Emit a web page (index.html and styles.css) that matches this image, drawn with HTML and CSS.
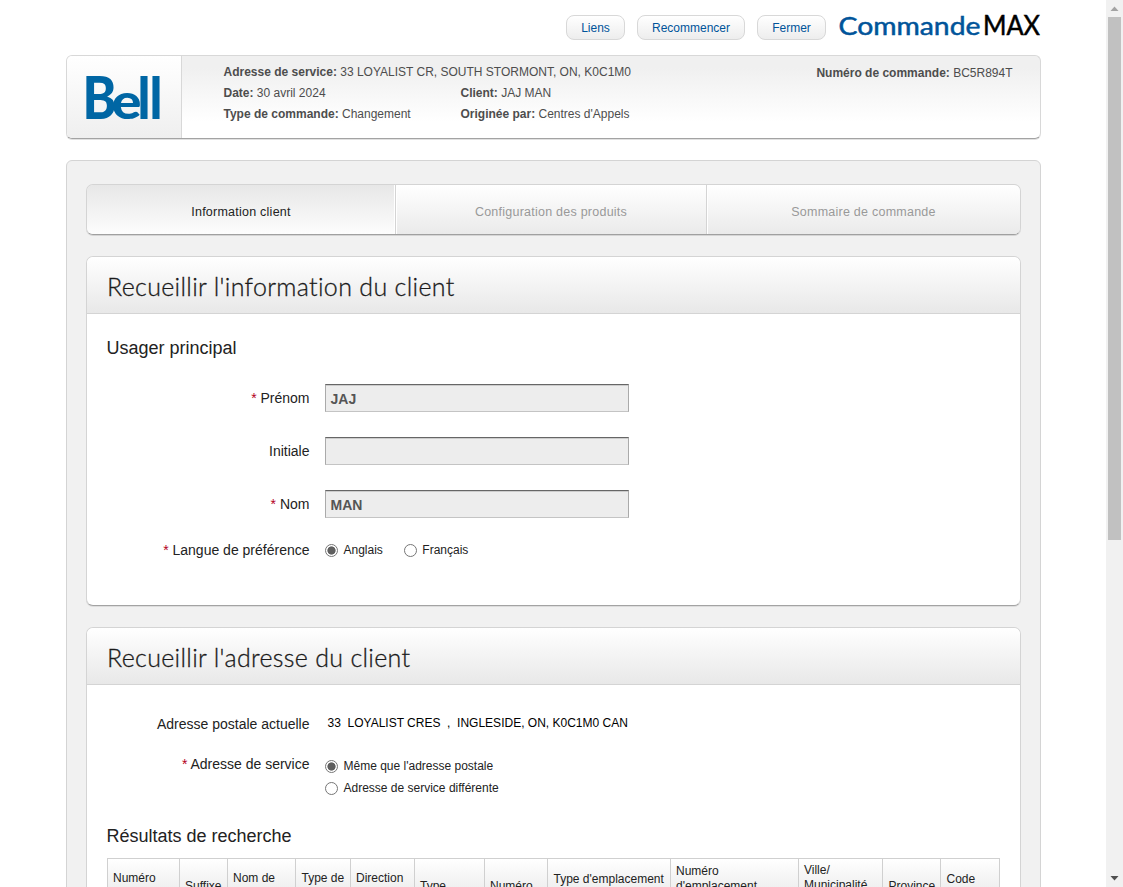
FILE: index.html
```html
<!DOCTYPE html>
<html lang="fr">
<head>
<meta charset="utf-8">
<title>CommandeMAX</title>
<link rel="stylesheet" href="styles.css">
</head>
<body>
<div class="viewport">
  <div class="page">
    <div class="topbar">
      <button class="btn btn-links">Liens</button>
      <button class="btn btn-restart">Recommencer</button>
      <button class="btn btn-close">Fermer</button>
      <svg class="brand" width="202" height="30" viewBox="0 0 202 30">
        <text class="brand-a" x="-.5" y="23.500" textLength="142" lengthAdjust="spacingAndGlyphs">Commande</text>
        <text class="brand-b" x="144" y="23.500" textLength="57" lengthAdjust="spacingAndGlyphs">MAX</text>
      </svg>
    </div>
    <header class="summary">
      <div class="summary-logo">
        <svg width="78" height="50" viewBox="0 0 78 50">
          <g class="bell">
            <text class="bell-b" x="-4.500" y="47" textLength="34" lengthAdjust="spacingAndGlyphs">B</text>
            <text class="bell-e" x="24.500" y="47" textLength="30" lengthAdjust="spacingAndGlyphs">e</text>
            <text class="bell-l" x="50.500" y="47" textLength="13" lengthAdjust="spacingAndGlyphs">l</text>
            <text class="bell-l" x="62.500" y="47" textLength="13" lengthAdjust="spacingAndGlyphs">l</text>
          </g>
        </svg>
      </div>
      <div class="summary-info">
        <div class="wide"><b>Adresse de service:</b> 33 LOYALIST CR, SOUTH STORMONT, ON, K0C1M0</div>
        <div><b>Date:</b> 30 avril 2024</div>
        <div><b>Client:</b> JAJ MAN</div>
        <div><b>Type de commande:</b> Changement</div>
        <div><b>Originée par:</b> Centres d'Appels</div>
      </div>
      <div class="summary-number"><b>Numéro de commande:</b> BC5R894T</div>
    </header>
    <main class="content">
      <nav class="tabs">
        <div class="tab tab-active">Information client</div>
        <div class="tab">Configuration des produits</div>
        <div class="tab">Sommaire de commande</div>
      </nav>
      <section class="card card-client">
        <h1 class="card-head">Recueillir l'information du client</h1>
        <h2 class="sub">Usager principal</h2>
        <div class="form">
          <div class="row"><label><i>*</i> Prénom</label><div class="field">JAJ</div></div>
          <div class="row"><label>Initiale</label><div class="field"></div></div>
          <div class="row"><label><i>*</i> Nom</label><div class="field">MAN</div></div>
          <div class="row row-lang"><label><i>*</i> Langue de préférence</label>
            <div class="radios"><span class="radio on"></span><span class="opt">Anglais</span><span class="radio second"></span><span class="opt">Français</span></div></div>
        </div>
      </section>
      <section class="card card-address">
        <h1 class="card-head">Recueillir l'adresse du client</h1>
        <div class="row row-postal"><label>Adresse postale actuelle</label><div class="postal">33&nbsp; LOYALIST CRES&nbsp; ,&nbsp; INGLESIDE, ON, K0C1M0 CAN</div></div>
        <div class="row row-service"><label><i>*</i> Adresse de service</label>
          <div class="stack">
            <div class="radios"><span class="radio on"></span><span class="opt">Même que l'adresse postale</span></div>
            <div class="radios"><span class="radio"></span><span class="opt">Adresse de service différente</span></div>
          </div></div>
        <h2 class="sub sub-results">Résultats de recherche</h2>
        <div class="table">
          <div class="c2">Numéro</div>
          <div class="c1">Suffixe</div>
          <div class="c2">Nom de</div>
          <div class="c2 shift">Type de</div>
          <div class="c2">Direction</div>
          <div class="c1">Type</div>
          <div class="c1">Numéro</div>
          <div class="c2 low shift">Type d'emplacement</div>
          <div class="c3">Numéro<br>d'emplacement</div>
          <div class="c3 high">Ville/<br>Municipalité</div>
          <div class="c1 shift">Province</div>
          <div class="c2 low shift">Code</div>
        </div>
      </section>
    </main>
  </div>
  <div class="scrollbar">
    <svg width="17" height="17"><path d="M4.500 11h8l-4-4.500z" fill="#a3a3a3"/></svg>
    <div class="thumb"></div>
    <svg class="down" width="17" height="17"><path d="M4.500 6h8l-4 4.500z" fill="#505050"/></svg>
  </div>
</div>
</body>
</html>
```
FILE: styles.css
```css
* { box-sizing: border-box; }
body { margin: 0; background: #fff; font: 12px/21px "Liberation Sans", Arial, sans-serif; color: #222; overflow: hidden; }
.viewport { display: flex; height: 887px; overflow: hidden; }
.page { width: 975px; margin-left: 66px; margin-right: 65px; flex: none; }

.topbar { display: flex; justify-content: flex-end; height: 55px; padding: 11px 0 0; }
.btn { height: 25px; margin-top: 4px; margin-right: 12px; padding: 0; border: 1px solid #d8d8d8; border-radius: 8px; background: linear-gradient(#fff, #ededed); color: #00549a; font: 12px/24px "Liberation Sans", Arial, sans-serif; }
.btn-links { width: 59px; }
.btn-restart { width: 108px; }
.btn-close { width: 69px; margin-right: 13px; }
.brand { overflow: visible; }
.brand-a { font: 400 25px Lato, sans-serif; fill: #00549a; stroke: #00549a; stroke-width: .5; }
.brand-b { font: 400 26px Lato, sans-serif; fill: #000; stroke: #000; stroke-width: .5; }

.summary { display: flex; height: 84px; border: 1px solid #d8d8d8; border-bottom-color: #a3a3a3; border-radius: 6px; box-shadow: 0 1px 0 #e1e1e1; background: linear-gradient(#f0f0f0 15%, #fff 80%); color: #4d4d4d; overflow: hidden; }
.summary-logo { width: 115px; padding: 16px 0 0 20px; border-right: 1px solid #d8d8d8; background: linear-gradient(#fff, #efefef); }
.summary-logo svg { display: block; overflow: visible; }
.bell { font-family: Lato, sans-serif; font-weight: 900; fill: #0066a4; }
.bell-b { font-size: 59px; }
.bell-e { font-size: 50px; }
.bell-l { font-size: 58px; }
.summary-info { display: grid; grid-template-columns: 237px 300px; grid-auto-rows: 21px; padding: 6px 0 0 41.5px; }
.wide { grid-column: 1 / 3; white-space: nowrap; }
.summary-number { margin-left: auto; padding: 7px 27.5px 0 0; white-space: nowrap; }

.content { height: 760px; margin-top: 21px; padding: 23px 19px 0; border: 1px solid #d4d4d4; border-radius: 6px; background: #f1f1f1; }
.tabs { display: grid; grid-template-columns: 308px 311px 314px; height: 51px; border: 1px solid #d4d4d4; border-bottom-color: #a0a0a0; border-radius: 7px; box-shadow: 0 1px 0 #d5d5d5; overflow: hidden; }
.tab { background: linear-gradient(#fff, #e8e8e8); color: #999; text-align: center; font-size: 12.5px; line-height: 54px; letter-spacing: .24px; border-left: 1px solid #d4d4d4; box-shadow: inset 1px 0 #fff; }
.tab-active { background: linear-gradient(#e7e7e7, #fff); color: #222; border-left: 0; box-shadow: inset -1px 0 #fff; }

.card { border: 1px solid #d4d4d4; border-bottom-color: #a3a3a3; border-radius: 7px; background: #fff; box-shadow: 0 1px 0 #ddd; }
.card-client { height: 350px; margin-top: 21px; }
.card-address { height: 400px; margin-top: 21px; }
.card-head { height: 57px; margin: 0; padding-left: 20px; border-bottom: 1px solid #d4d4d4; border-radius: 6px 6px 0 0; background: linear-gradient(#fff, #e8e8e8); font: 300 25px/59px Lato, sans-serif; letter-spacing: .32px; font-variant-ligatures: none; -webkit-text-stroke: .3px #1a1a1a; color: #1a1a1a; white-space: nowrap; }
.sub { margin: 24px 0 0 19.5px; font: 18px/21px "Liberation Sans", Arial, sans-serif; color: #222; }
.form { padding-top: 25px; }
.row { display: grid; grid-template-columns: 202.5px 304px; column-gap: 15.5px; margin: 0 0 25px 20px; }
.row label { text-align: right; font-size: 14px; line-height: 28px; white-space: nowrap; }
.row i { font-style: normal; color: #b3001b; }
.field { height: 28px; padding-left: 4.5px; border: 1px solid #aaa; border-top-color: #666; border-bottom-color: #c4c4c4; background: #ededed; box-shadow: inset 0 1px #ccc; font: bold 14px/28px "Liberation Sans", Arial, sans-serif; color: #555; }
.row-lang { margin-top: -7px; }
.radios { display: flex; align-items: center; height: 28px; }
.radio { width: 13px; height: 13px; margin-top: 1px; border: 1px solid #767676; border-radius: 50%; background: #fff; flex: none; }
.radio.on { background: radial-gradient(circle, #5f5f5f 3.700px, #fff 4.500px); }
.radio.second { margin-left: 21px; }
.opt { margin-left: 5.5px; margin-top: 1px; white-space: nowrap; }
.row-postal { margin: 25px 0 0 20px; }
.postal { padding-left: 2.5px; line-height: 26px; color: #000; white-space: nowrap; }
.row-service { margin: 12px 0 0 20px; }
.stack { padding-top: 5px; }
.stack .radios { height: 22px; }
.sub-results { margin-top: 27px; }
.table { display: grid; grid-template-columns: 72px 48px 68px 55px 64px 70px 63px 123px 128px 84px 58px 59px; height: 60px; margin: 11px 20px 0; width: 893px; border: 1px solid #d0d0d0; border-right: 0; background: linear-gradient(#fff, #e0e0e0); line-height: 15px; white-space: nowrap; }
.table div { padding-left: 5px; border-right: 1px solid #d0d0d0; }
.table .shift { padding-left: 5.5px; }
.table .c1 { padding-top: 20px; }
.table .c2 { padding-top: 12px; }
.table .c2.low { padding-top: 13px; }
.table .c3 { padding-top: 5px; }
.table .c3.high { padding-top: 4px; }

.scrollbar { display: flex; flex-direction: column; width: 17px; height: 887px; background: #f1f1f1; flex: none; }
.scrollbar svg { display: block; }
.thumb { width: 13px; height: 523px; margin-left: 2px; background: #c1c1c1; }
.down { margin-top: auto; }
```
